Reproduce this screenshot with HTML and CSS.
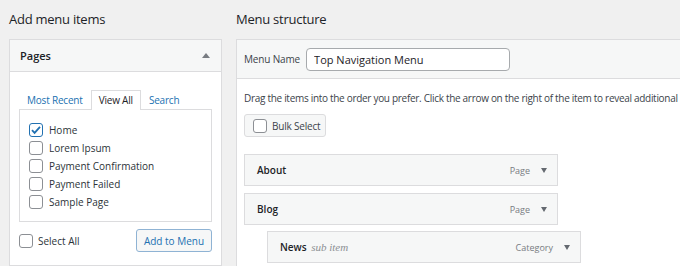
FILE: index.html
```html
<!DOCTYPE html>
<html lang="en">
<head>
    <meta charset="UTF-8">
    <title>Menus</title>
    <link rel="stylesheet" href="styles.css">
</head>
<body>
    <div class="menus-wrap">

        <!-- left column: add menu items -->
        <div class="col-left">
            <h2>Add menu items</h2>
            <div class="box">
                <div class="box-head">
                    <span>Pages</span>
                    <span class="arrow-up"></span>
                </div>
                <div class="box-body">
                    <div class="tabs">
                        <span class="tab">Most Recent</span>
                        <span class="tab active">View All</span>
                        <span class="tab">Search</span>
                    </div>
                    <div class="tab-panel">
                        <label class="check-row"><span class="cb checked"><svg viewBox="0 0 14 14" width="14" height="14"><path d="M3 7.2l2.6 2.7L11 3.8" fill="none" stroke="#2271b1" stroke-width="1.8"/></svg></span>Home</label>
                        <label class="check-row"><span class="cb"></span>Lorem Ipsum</label>
                        <label class="check-row"><span class="cb"></span>Payment Confirmation</label>
                        <label class="check-row"><span class="cb"></span>Payment Failed</label>
                        <label class="check-row"><span class="cb"></span>Sample Page</label>
                    </div>
                    <div class="box-actions">
                        <label class="select-all"><span class="cb"></span>Select All</label>
                        <button class="btn-add">Add to Menu</button>
                    </div>
                </div>
                <div class="box-sep"></div>
            </div>
        </div>

        <!-- right column: menu structure -->
        <div class="col-right">
            <h2>Menu structure</h2>
            <div class="panel">
                <div class="panel-head">
                    <span class="name-label">Menu Name</span>
                    <input class="name-input" type="text" value="Top Navigation Menu">
                </div>
                <div class="panel-body">
                    <p class="hint">Drag the items into the order you prefer. Click the arrow on the right of the item to reveal additional</p>
                    <div class="bulk-btn"><span class="cb"></span>Bulk Select</div>

                    <ul class="menu-items">
                        <li class="menu-item">
                            <span class="item-title">About</span>
                            <span class="item-type">Page</span>
                            <span class="arrow-down"></span>
                        </li>
                        <li class="menu-item">
                            <span class="item-title">Blog</span>
                            <span class="item-type">Page</span>
                            <span class="arrow-down"></span>
                        </li>
                        <li class="menu-item sub">
                            <span class="item-title">News <em>sub item</em></span>
                            <span class="item-type">Category</span>
                            <span class="arrow-down"></span>
                        </li>
                    </ul>
                </div>
            </div>
        </div>

    </div>
</body>
</html>
```

FILE: styles.css
```css
body {
    margin: 0;
    padding: 0;
    background-color: #f0f0f0;
    color: #1d2327;
    font-family: 'Open Sans', 'Noto Sans', sans-serif;
    font-size: 11px;
    overflow: hidden;
}

.menus-wrap {
    display: flex;
    padding-left: 9px;
}

h2 {
    margin: 0;
    height: 39px;
    line-height: 39px;
    font-size: 13px;
    font-weight: 400;
    letter-spacing: -0.25px;
    color: #1d2327;
}

.col-left {
    width: 213px;
    flex-shrink: 0;
}

.col-right {
    margin-left: 14px;
    flex: 1;
    min-width: 0;
}

/* checkbox */
.cb {
    display: inline-block;
    box-sizing: border-box;
    width: 14px;
    height: 14px;
    border: 1px solid #8c8f94;
    border-radius: 3px;
    background: #fff;
    margin-right: 6px;
    vertical-align: middle;
    position: relative;
    flex-shrink: 0;
}

.cb.checked {
    border-color: #2271b1;
}

.cb svg {
    position: absolute;
    left: -1px;
    top: -1px;
}

/* left box */
.box {
    background: #fff;
    border: 1px solid #dcdcde;
    border-bottom: none;
    height: 240px;
}

.box-head {
    display: flex;
    justify-content: space-between;
    align-items: center;
    height: 31px;
    padding: 0 11px 0 10px;
    background: #f6f7f7;
    border-bottom: 1px solid #dcdcde;
    font-size: 11px;
    font-weight: 600;
}

.arrow-up {
    width: 0;
    height: 0;
    border-left: 4px solid transparent;
    border-right: 4px solid transparent;
    border-bottom: 5px solid #787c82;
}

.box-body {
    padding: 18px 9px 0 9px;
}

.tabs {
    display: flex;
    height: 19px;
}

.tab {
    padding: 0 7px;
    line-height: 19px;
    color: #2271b1;
    font-size: 10px;
    letter-spacing: -0.2px;
    border: 1px solid transparent;
    border-bottom: none;
}

.tab.active {
    color: #1d2327;
    border-color: #dcdcde;
    background: #fff;
    margin-bottom: -1px;
    position: relative;
    z-index: 1;
    height: 19px;
}

.tab-panel {
    border: 1px solid #dcdcde;
    padding: 11px 9px;
    height: 89px;
}

.check-row {
    display: flex;
    align-items: center;
    height: 18px;
    font-size: 10px;
    color: #2c3338;
}

.box-actions {
    display: flex;
    justify-content: space-between;
    align-items: center;
    margin-top: 7px;
    height: 23px;
}

.select-all {
    display: flex;
    align-items: center;
    font-size: 10px;
    color: #2c3338;
}

.select-all .cb {
    margin-right: 5px;
}

.btn-add {
    font-family: inherit;
    font-size: 10px;
    color: #2271b1;
    background: #f6f7f7;
    border: 1px solid #8fb3d4;
    border-radius: 3px;
    height: 23px;
    width: 76px;
    padding: 0;
}

.box-sep {
    margin-top: 13px;
    border-top: 1px solid #dcdcde;
}

/* right panel */
.panel {
    background: #fff;
    border-left: 1px solid #dcdcde;
    border-top: 1px solid #dcdcde;
    height: 240px;
}

.panel-head {
    display: flex;
    align-items: center;
    height: 38px;
    padding-left: 7px;
    background: #f6f7f7;
    border-bottom: 1px solid #dcdcde;
}

.name-label {
    font-size: 10px;
    letter-spacing: -0.15px;
    color: #3c434a;
    margin-right: 6px;
}

.name-input {
    box-sizing: border-box;
    width: 204px;
    height: 23px;
    border: 1px solid #a7aaad;
    border-radius: 4px;
    padding: 0 7px;
    font-family: inherit;
    font-size: 11px;
    color: #1d2327;
}

.panel-body {
    padding: 0 7px;
}

.hint {
    margin: 0;
    padding-top: 11px;
    height: 24px;
    line-height: 16px;
    font-size: 10px;
    letter-spacing: -0.3px;
    color: #3c434a;
    white-space: nowrap;
}

.bulk-btn {
    display: inline-flex;
    align-items: center;
    box-sizing: border-box;
    width: 82px;
    height: 23px;
    padding: 0 0 0 8px;
    background: #f6f7f7;
    border: 1px solid #dcdcde;
    border-radius: 3px;
    font-size: 10px;
    letter-spacing: -0.2px;
    color: #3c434a;
    white-space: nowrap;
}

.bulk-btn .cb {
    margin-right: 5px;
}

.menu-items {
    list-style: none;
    margin: 17px 0 0 0;
    padding: 0;
}

.menu-item {
    box-sizing: border-box;
    display: flex;
    align-items: center;
    width: 314px;
    height: 32px;
    margin-bottom: 7px;
    padding: 0 10px 0 12px;
    background: #f6f7f7;
    border: 1px solid #dcdcde;
}

.menu-item.sub {
    margin-left: 23px;
    margin-top: -1px;
}

.item-title {
    flex: 1;
    font-size: 10px;
    font-weight: 600;
    color: #1d2327;
}

.item-title em {
    font-family: 'Liberation Serif', serif;
    font-size: 11px;
    font-weight: 400;
    color: #8c8f94;
    margin-left: 2px;
}

.item-type {
    font-size: 9px;
    color: #787c82;
    margin-right: 11px;
}

.arrow-down {
    width: 0;
    height: 0;
    border-left: 3.5px solid transparent;
    border-right: 3.5px solid transparent;
    border-top: 5px solid #646970;
}
```
